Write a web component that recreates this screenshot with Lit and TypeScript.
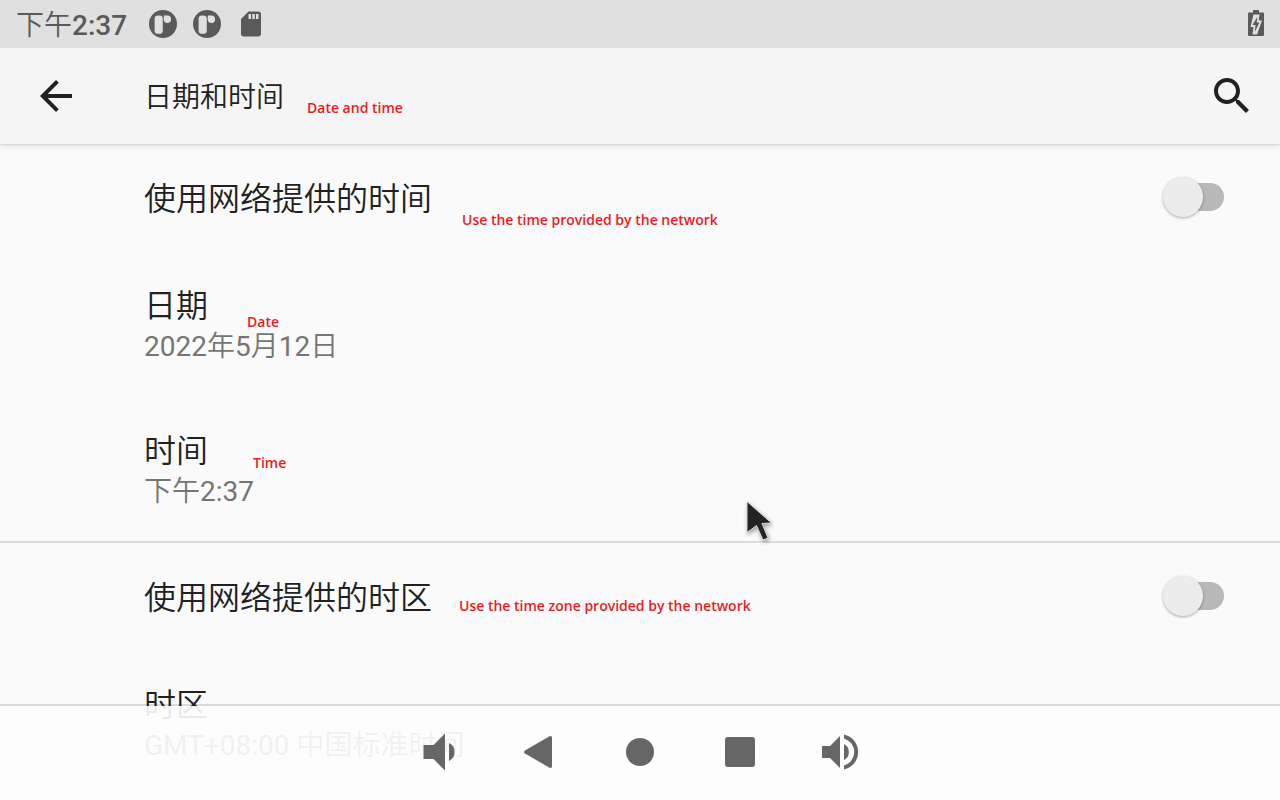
import { LitElement, html, css, svg } from "lit";
import { customElement, state } from "lit/decorators.js";

interface Note {
  x: number;
  y: number;
  text: string;
}

const NOTES: Note[] = [
  { x: 307, y: 98, text: "Date and time" },
  { x: 462, y: 210, text: "Use the time provided by the network" },
  { x: 247, y: 312, text: "Date" },
  { x: 253, y: 453, text: "Time" },
  { x: 459, y: 596, text: "Use the time zone provided by the network" },
];

const badgeIcon = svg`<svg class="status-icon" viewBox="0 0 30 30" aria-hidden="true">
  <circle cx="15" cy="15" r="14" fill="#5a5a5a"/>
  <rect x="6.6" y="6.4" width="8.2" height="18.4" rx="3.4" fill="#e0e0e0"/>
  <path d="M15.800 6.600h3.600a3.700 3.700 0 1 1-3.700 3.700z" fill="#e0e0e0"/>
</svg>`;

@customElement("app-root")
export class AppRoot extends LitElement {
  @state() private autoTime = false;
  @state() private autoZone = false;

  static styles = css`
    :host {
      display: flex;
      flex-direction: column;
      position: relative;
      height: 100vh;
      overflow: hidden;
      background: #fafafa;
      color: #212121;
      font-family: Roboto, "Noto Sans CJK SC", sans-serif;
      font-size: 28px;
      line-height: 40px;
    }
    * { box-sizing: border-box; }
    button {
      display: flex;
      padding: 0;
      border: 0;
      background: none;
      color: inherit;
      font: inherit;
      text-align: left;
    }
    svg { display: block; fill: currentColor; }
    .status {
      display: flex;
      flex: none;
      align-items: center;
      gap: 14px;
      height: 48px;
      padding: 0 8px 0 16px;
      background: #e0e0e0;
      color: #5a5a5a;
    }
    .clock { margin-right: 7px; padding-top: 3px; font-weight: 500; }
    .clock-cjk { font-weight: 350; }
    .status-icon { width: 30px; height: 30px; }
    .battery { width: 32px; height: 32px; margin-left: auto; }
    .bar {
      display: flex;
      flex: none;
      align-items: center;
      height: 96px;
      padding: 0 24px 0 32px;
      background: #f5f5f5;
      box-shadow: 0 1px 2px rgba(0, 0, 0, 0.14), 0 4px 8px rgba(0, 0, 0, 0.06);
      clip-path: inset(0 0 -16px 0);
      z-index: 1;
    }
    .bar svg { width: 48px; height: 48px; }
    h1 {
      flex: 1;
      margin: 0 0 0 64px;
      padding-top: 4px;
      font-size: 28px;
      font-weight: 350;
    }
    .list { flex: 1; overflow: hidden; }
    .group + .group { border-top: 2px solid #dcdcdc; }
    .row {
      display: flex;
      align-items: center;
      width: 100%;
      padding: 30px 56px 30px 144px;
      font-weight: 350;
    }
    .text { flex: 1; padding-top: 4px; }
    .title { display: block; font-size: 32px; line-height: 43px; }
    .summary { display: block; color: #757575; line-height: 38px; }
    .latin { font-weight: 400; }
    .switch {
      appearance: none;
      display: grid;
      align-items: center;
      width: 61px;
      height: 40px;
      margin: 0 0 1px;
    }
    .switch::before {
      content: "";
      grid-area: 1 / 1;
      height: 28px;
      margin-left: 8px;
      border-radius: 14px;
      background: #b8b8b8;
    }
    .switch::after {
      content: "";
      grid-area: 1 / 1;
      width: 40px;
      height: 40px;
      border-radius: 50%;
      background: #ececec;
      box-shadow: 0 1px 3px rgba(0, 0, 0, 0.32);
    }
    .switch:checked::after { justify-self: end; background: #008577; }
    .nav {
      position: absolute;
      inset: auto 0 0 0;
      display: flex;
      align-items: center;
      justify-content: center;
      gap: 52px;
      height: 96px;
      padding-bottom: 2px;
      border-top: 2px solid rgba(0, 0, 0, 0.13);
      background: rgba(253, 253, 253, 0.91);
      background-clip: padding-box;
      color: #666;
      z-index: 2;
    }
    .nav svg { width: 48px; height: 48px; }
    .note {
      position: absolute;
      z-index: 3;
      color: #ed1c24;
      font: 600 14px/20px "Open Sans", "Noto Sans", sans-serif;
      white-space: nowrap;
    }
    .cursor {
      position: absolute;
      left: 740px;
      top: 494px;
      width: 40px;
      height: 54px;
      z-index: 3;
      filter: drop-shadow(1px 2px 2px rgba(0, 0, 0, 0.4));
    }
  `;

  render() {
    return html`
      <header class="status">
        <span class="clock"><span class="clock-cjk">下午</span>2:37</span>
        ${badgeIcon}${badgeIcon}
        <svg class="status-icon" viewBox="0 0 24 24" aria-hidden="true"><path d="M18 2h-8L4 8v12c0 1.1.9 2 2 2h12c1.1 0 2-.9 2-2V4c0-1.1-.9-2-2-2zm-6 6h-2V4h2v4zm3 0h-2V4h2v4zm3 0h-2V4h2v4z"/></svg>
        <svg class="battery" viewBox="0 0 32 32" aria-hidden="true">
          <path d="M13 2h6v2.500h4q1 0 1 1V27q0 1-1 1H9q-1 0-1-1V5.500q0-1 1-1h4z"/>
          <path d="M13.500 6.500H19.500L18.800 12.500H22L17 26.500H12.500L13.500 19H10.500z" fill="#e0e0e0"/>
          <path d="M17.300 9L12.500 17h3l-.8 7L19.500 14.500h-2.700z" fill="#5a5a5a"/>
        </svg>
      </header>
      <div class="bar">
        <button aria-label="返回"><svg viewBox="0 0 24 24"><path d="M20 11H7.830l5.590-5.590L12 4l-8 8 8 8 1.410-1.410L7.830 13H20v-2z"/></svg></button>
        <h1>日期和时间</h1>
        <button aria-label="搜索"><svg viewBox="0 0 24 24"><path d="M15.500 14h-.79l-.28-.27C15.410 12.590 16 11.110 16 9.500 16 5.910 13.090 3 9.500 3S3 5.910 3 9.500 5.910 16 9.500 16c1.610 0 3.090-.59 4.230-1.570l.27.28v.79l5 4.990L20.490 19l-4.990-5zm-6 0C7.010 14 5 11.990 5 9.500S7.010 5 9.500 5 14 7.010 14 9.500 11.990 14 9.500 14z"/></svg></button>
      </div>
      <main class="list">
        <section class="group">
          <label class="row">
            <span class="text title">使用网络提供的时间</span>
            <input class="switch" type="checkbox" .checked=${this.autoTime}
              @change=${(e: Event) => (this.autoTime = (e.target as HTMLInputElement).checked)}>
          </label>
          <button class="row"><span class="text"><span class="title">日期</span><span class="summary"><span class="latin">2022</span>年<span class="latin">5</span>月<span class="latin">12</span>日</span></span></button>
          <button class="row"><span class="text"><span class="title">时间</span><span class="summary">下午<span class="latin">2:37</span></span></span></button>
        </section>
        <section class="group">
          <label class="row">
            <span class="text title">使用网络提供的时区</span>
            <input class="switch" type="checkbox" .checked=${this.autoZone}
              @change=${(e: Event) => (this.autoZone = (e.target as HTMLInputElement).checked)}>
          </label>
          <button class="row"><span class="text"><span class="title">时区</span><span class="summary"><span class="latin">GMT+08:00 </span>中国标准时间</span></span></button>
        </section>
      </main>
      <nav class="nav">
        <button aria-label="降低音量"><svg viewBox="0 0 48 48"><path d="M7.500 17h10L29 5.500v37L17.500 31h-10zM33 15a10 10 0 0 1 0 18z"/></svg></button>
        <button aria-label="返回"><svg viewBox="0 0 48 48"><path d="M9 22.500L33.500 8.300Q36 7.300 36 10v28q0 2.700-2.500 1.700L9 25.500q-2-1.500 0-3z"/></svg></button>
        <button aria-label="主屏幕"><svg viewBox="0 0 48 48"><circle cx="24" cy="24" r="14"/></svg></button>
        <button aria-label="最近任务"><svg viewBox="0 0 48 48"><rect x="9" y="9" width="30" height="30" rx="3"/></svg></button>
        <button aria-label="提高音量"><svg viewBox="0 0 48 48"><path d="M6 18h8L24 8v32L14 30H6zM28 16a9 9 0 0 1 0 16zM28 6.500a17.900 17.900 0 0 1 0 35v-4a14 14 0 0 0 0-27z"/></svg></button>
      </nav>
      ${NOTES.map((n) => html`<span class="note" style="left:${n.x}px;top:${n.y}px">${n.text}</span>`)}
      <svg class="cursor" viewBox="0 0 40 54" aria-hidden="true"><path d="M7 7.500V38.500L16.500 31.500L23 46L28 44L22 29.500L31.500 29Z" fill="#242424" stroke="#f4f4f4" stroke-opacity=".8" stroke-width="1"/></svg>
    `;
  }
}
